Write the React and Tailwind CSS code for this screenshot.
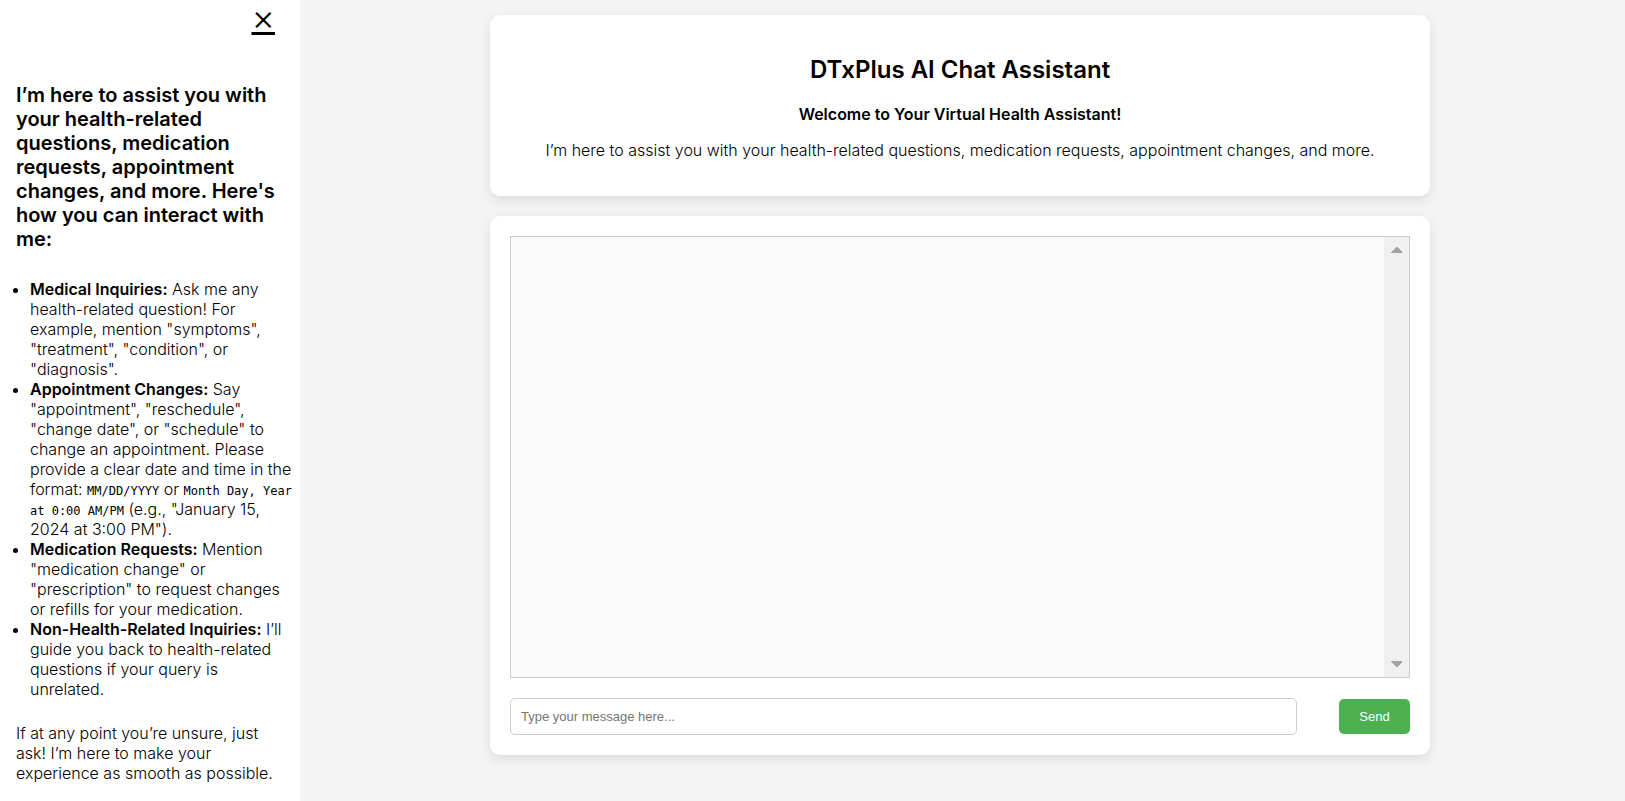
import { useState } from "react";

function Code({ children }) {
  return <code className="font-['DejaVu_Sans_Mono',monospace] text-xs leading-none">{children}</code>;
}

function Topic({ title, children }) {
  return (
    <li>
      <strong className="font-semibold">{title}</strong> {children}
    </li>
  );
}

function Sidebar({ onClose }) {
  return (
    <aside className="w-[300px] shrink-0 bg-white pb-5">
      <div className="flex h-[83px] justify-end pr-[25px]">
        <button
          type="button"
          aria-label="Close"
          onClick={onClose}
          className="h-[34px] cursor-pointer text-4xl leading-[34px] font-light underline"
        >
          ×
        </button>
      </div>
      <h3 className="pr-4 pl-4 text-xl leading-6 font-semibold">
        I’m here to assist you with your health-related questions, medication requests, appointment
        changes, and more. Here's how you can interact with me:
      </h3>
      <ul className="mt-7 list-disc pr-1.5 pl-[30px] leading-5">
        <Topic title="Medical Inquiries:">
          Ask me any health-related question! For example, mention "symptoms", "treatment",
          "condition", or "diagnosis".
        </Topic>
        <Topic title="Appointment Changes:">
          Say "appointment", "reschedule", "change date", or "schedule" to change an appointment.
          Please provide a clear date and time in the format: <Code>MM/DD/YYYY</Code> or{" "}
          <Code>Month Day, Year at 0:00 AM/PM</Code> (e.g., "January 15, 2024 at 3:00 PM").
        </Topic>
        <Topic title="Medication Requests:">
          Mention "medication change" or "prescription" to request changes or refills for your
          medication.
        </Topic>
        <Topic title="Non-Health-Related Inquiries:">
          I’ll guide you back to health-related questions if your query is unrelated.
        </Topic>
      </ul>
      <p className="mt-6 px-4 leading-5">
        If at any point you’re unsure, just ask! I’m here to make your experience as smooth as
        possible.
      </p>
    </aside>
  );
}

function ScrollRail() {
  return (
    <div className="flex w-[25px] shrink-0 flex-col items-center justify-between bg-[#f0f0f0] py-2.5">
      <svg width="11" height="6" viewBox="0 0 11 6" fill="#a3a3a3" shapeRendering="crispEdges" aria-hidden="true">
        <path d="M5 0h1l5 5v1H0V5z" />
      </svg>
      <svg width="11" height="6" viewBox="0 0 11 6" fill="#a3a3a3" shapeRendering="crispEdges" aria-hidden="true">
        <path d="M0 0h11v1L6 6H5L0 1z" />
      </svg>
    </div>
  );
}

export default function App() {
  const [open, setOpen] = useState(true);
  const [draft, setDraft] = useState("");
  const [messages, setMessages] = useState([]);

  const send = (event) => {
    event.preventDefault();
    if (!draft.trim()) return;
    setMessages([...messages, draft.trim()]);
    setDraft("");
  };

  return (
    <div className="flex min-h-screen bg-[#f4f4f4] font-['Inter',sans-serif] text-base font-light text-black">
      {open && <Sidebar onClose={() => setOpen(false)} />}
      <main className="flex min-w-0 flex-1 flex-col items-center gap-5 pt-[15px] pr-[5px] pb-5">
        <header className="w-full max-w-[940px] rounded-[10px] bg-white px-5 pt-10 pb-9 text-center shadow-[0_4px_12px_rgba(0,0,0,0.1)]">
          <h1 className="text-2xl leading-[30px] font-semibold">DTxPlus AI Chat Assistant</h1>
          <h2 className="mt-[19px] leading-5 font-semibold">Welcome to Your Virtual Health Assistant!</h2>
          <p className="mt-4 leading-5">
            I’m here to assist you with your health-related questions, medication requests,
            appointment changes, and more.
          </p>
        </header>
        <section className="w-full max-w-[940px] rounded-[10px] bg-white p-5 shadow-[0_4px_12px_rgba(0,0,0,0.1)]">
          <div className="flex h-[442px] border border-[#ccc] bg-[#fafafa]">
            <div className="flex flex-1 flex-col gap-2 overflow-hidden p-2.5">
              {messages.map((message, i) => (
                <p key={i}>{message}</p>
              ))}
            </div>
            <ScrollRail />
          </div>
          <form
            onSubmit={send}
            className="mt-5 flex items-center justify-between gap-[42px] font-['Liberation_Sans',sans-serif] text-[13px]"
          >
            <input
              type="text"
              aria-label="Message"
              value={draft}
              onChange={(event) => setDraft(event.target.value)}
              placeholder="Type your message here..."
              className="h-[37px] min-w-0 flex-1 rounded-[5px] border border-[#ccc] bg-white px-2.5 font-normal placeholder:text-[#757575]"
            />
            <button
              type="submit"
              className="h-[35px] w-[71px] cursor-pointer rounded-[5px] bg-[#4caf50] text-center font-normal text-white"
            >
              Send
            </button>
          </form>
        </section>
      </main>
    </div>
  );
}
